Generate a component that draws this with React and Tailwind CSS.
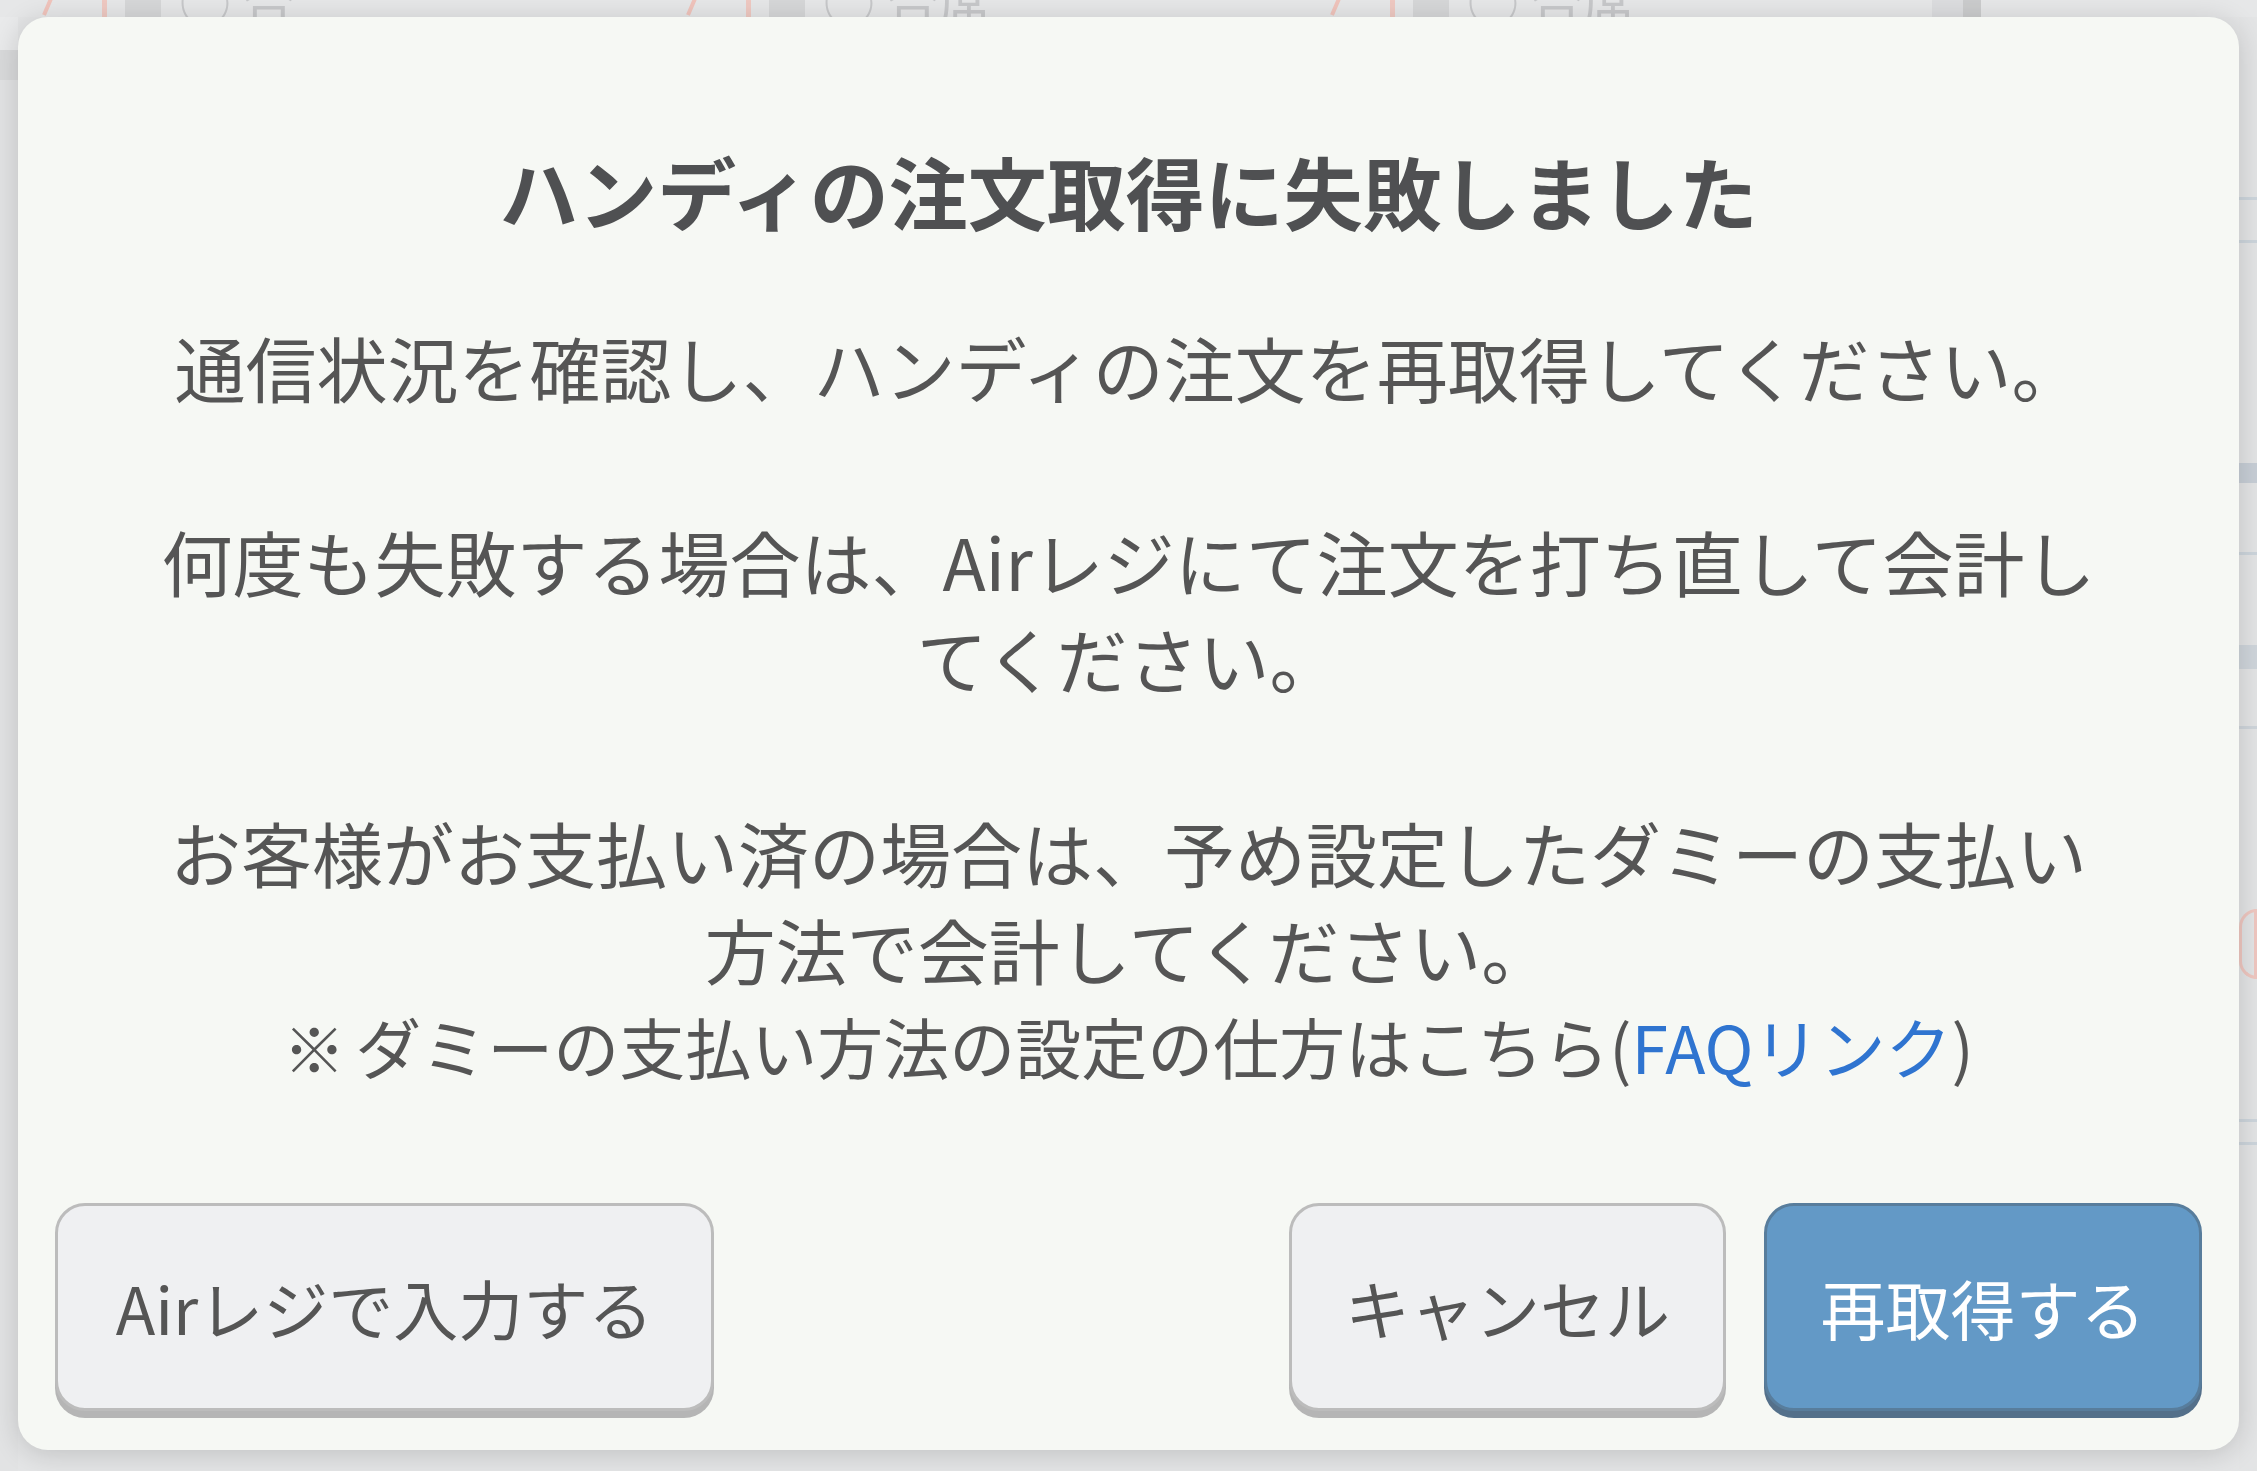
import React from "react";

const Pencil = () => (
  <svg width="44" height="40" viewBox="0 0 44 40" fill="none" stroke="#f0c4bc" strokeWidth="4">
    <path d="M4 38 L16 10 L40 -20" />
    <path d="M16 10 L28 18" />
  </svg>
);

const BgCell = ({ label }) => (
  <div className="flex items-end w-[644px] shrink-0 h-[17px] overflow-hidden">
    <div className="flex items-end gap-[18px] pl-[40px]">
      <Pencil />
      <div className="w-[5px] h-[40px] bg-[#efc9c2]" />
      <div className="w-[36px] h-[40px] bg-[#d6d7d8]" />
      <div className="text-[52px] leading-[60px] text-[#c7c8ca] font-['Noto_Sans_CJK_JP',sans-serif] -mb-[14px]">
        ○ {label}
      </div>
    </div>
  </div>
);

const Btn = ({ children, primary, className = "" }) => (
  <button
    className={`h-[208px] rounded-[30px] border-[3px] text-[65px] leading-none font-['Noto_Sans_CJK_JP',sans-serif] ${
      primary
        ? "bg-[#6399c6] border-[#587d9c] text-white shadow-[0_7px_0_#54708a]"
        : "bg-[#eff0f2] border-[#bcbcbc] text-[#555555] shadow-[0_7px_0_#b5b5b5]"
    } ${className}`}
  >
    {children}
  </button>
);

export default function App() {
  return (
    <div className="relative w-[2257px] h-[1471px] overflow-hidden bg-[#e4e5e6] font-['Noto_Sans_CJK_JP','Noto_Sans',sans-serif]">
      {/* dimmed page behind the dialog */}
      <div className="flex flex-col h-full">
        <div className="flex h-[17px] bg-[#e6e7e8]">
          <BgCell label="合" />
          <BgCell label="合席" />
          <BgCell label="合席" />
          <div className="flex items-stretch">
            <div className="w-[31px] bg-[#dcdddf]" />
            <div className="w-[18px] bg-[#cbcccd]" />
          </div>
        </div>
        <div className="flex flex-1">
          <div className="w-[18px] flex flex-col">
            <div className="h-[33px] bg-[#e9eaeb]" />
            <div className="h-[30px] bg-[#d9dadb]" />
            <div className="flex-1 bg-[#e2e3e4]" />
          </div>
          <div className="flex-1" />
          <div className="w-[18px] flex flex-col bg-[#e3e4e5]">
            <div className="h-[180px]" />
            <div className="h-[46px] border-y-[3px] border-[#cdd5dc]" />
            <div className="h-[220px]" />
            <div className="h-[20px] bg-[#c7ced6]" />
            <div className="h-[72px] border-b-[3px] border-[#cdd5dc]" />
            <div className="h-[90px]" />
            <div className="h-[24px] bg-[#cfd5db]" />
            <div className="h-[60px] border-b-[3px] border-[#cfd5db]" />
            <div className="h-[180px]" />
            <div className="h-[70px] rounded-l-full border-[3px] border-[#efc7c0]" />
            <div className="h-[140px]" />
            <div className="h-[3px] bg-[#cdd5dc]" />
            <div className="h-[20px]" />
            <div className="h-[3px] bg-[#cdd5dc]" />
          </div>
        </div>
      </div>

      {/* dialog */}
      <div className="absolute left-[18px] top-[17px] w-[2221px] h-[1433px] rounded-[30px] bg-[#f6f8f4] shadow-[0_4px_28px_rgba(0,0,0,0.16)] flex flex-col items-center">
        <h1 className="pt-[119px] text-[79px] leading-[110px] font-bold text-[#4f5052]">
          ハンディの注文取得に失敗しました
        </h1>

        <div className="mt-[72px] w-[1960px] text-center text-[71px] leading-[97px] text-[#555555]">
          <p>通信状況を確認し、ハンディの注文を再取得してください。</p>
          <p className="mt-[97px]">何度も失敗する場合は、Airレジにて注文を打ち直して会計してください。</p>
          <p className="mt-[97px]">
            お客様がお支払い済の場合は、予め設定したダミーの支払い方法で会計してください。
          </p>
          <p className="text-[66px]">
            <span className="text-[62px] font-bold mr-[10px]">※</span>ダミーの支払い方法の設定の仕方はこちら(<span className="text-[#2f74d0]">FAQリンク</span>)
          </p>
        </div>

        <div className="mt-auto w-full flex items-end px-[37px] pb-[39px]">
          <Btn className="w-[659px]">Airレジで入力する</Btn>
          <div className="flex-1" />
          <div className="flex gap-[38px]">
            <Btn className="w-[437px]">キャンセル</Btn>
            <Btn primary className="w-[438px]">再取得する</Btn>
          </div>
        </div>
      </div>
    </div>
  );
}
